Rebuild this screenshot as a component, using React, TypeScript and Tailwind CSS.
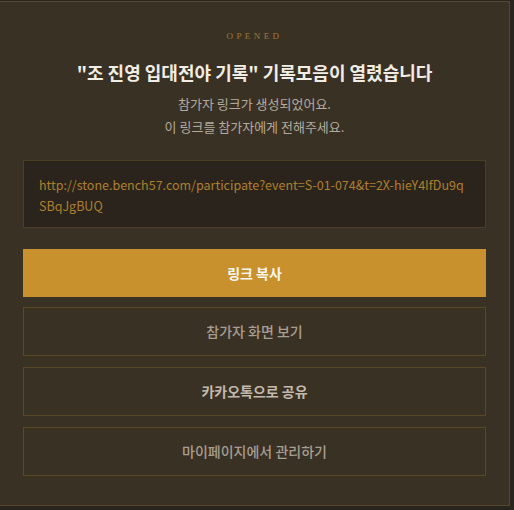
export default function App() {
  const kr = { fontFamily: '"Noto Sans CJK KR", "Noto Sans", sans-serif' }
  return (
    <div className="min-h-[510px] w-[514px] bg-[#2a241e] pt-px" style={kr}>
      <div className="-ml-px w-[511px] h-[505px] border border-[#584830] bg-[#3a3125] px-[23px] pt-[28px]">
        <p
          className="text-center text-[9px] leading-[12px] tracking-[0.38em] text-[#9a7a3a]"
          style={{ fontFamily: '"Liberation Serif", serif' }}
        >
          OPENED
        </p>
        <h2 className="mt-[18px] text-center text-[18px] font-bold leading-[24px] text-[#f2ede4]">
          "조 진영 입대전야 기록" 기록모음이 열렸습니다
        </h2>
        <div className="mt-[8px] text-center text-[13px] leading-[23px] text-[#b3aa9e]">
          <p>참가자 링크가 생성되었어요.</p>
          <p>이 링크를 참가자에게 전해주세요.</p>
        </div>
        <div className="mt-[22px] h-[68px] border border-[#4b3d27] bg-[#2b241c] px-[15px] py-[13px] text-[12.5px] leading-[21px] text-[#ad7f2e]">
          <span className="block whitespace-nowrap">
            http://stone.bench57.com/participate?event=S-01-074&amp;t=2X-hieY4IfDu9q
          </span>
          <span className="block whitespace-nowrap">SBqJgBUQ</span>
        </div>
        <button className="mt-[21px] flex h-[48px] w-full items-center justify-center bg-[#c8912d] text-[14px] font-bold text-[#fbf6ec]">
          링크 복사
        </button>
        <div className="mt-[10px] flex flex-col gap-[11px]">
          <button className="flex h-[49px] w-full items-center justify-center border border-[#5a4727] text-[14px] font-medium text-[#a89e90]">
            참가자 화면 보기
          </button>
          <button className="flex h-[49px] w-full items-center justify-center border border-[#5a4727] text-[14px] font-bold text-[#c2b9ac]">
            카카오톡으로 공유
          </button>
          <button className="flex h-[49px] w-full items-center justify-center border border-[#5a4727] text-[14px] font-medium text-[#a89e90]">
            마이페이지에서 관리하기
          </button>
        </div>
      </div>
    </div>
  )
}
